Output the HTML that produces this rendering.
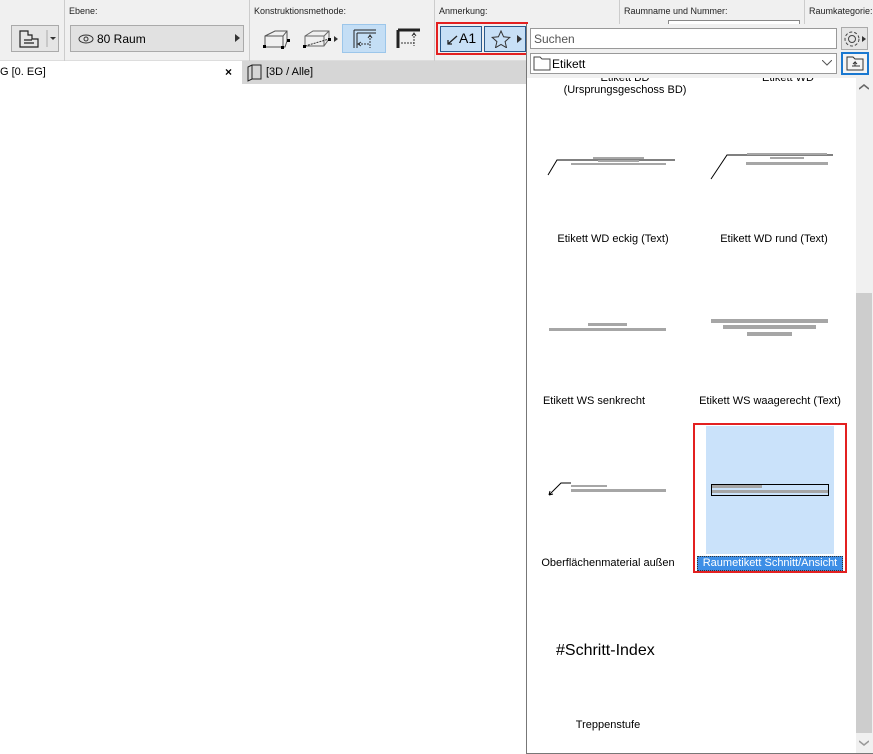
<!DOCTYPE html><html><head><meta charset="utf-8"><style>
*{margin:0;padding:0;box-sizing:border-box}
body{width:873px;height:754px;overflow:hidden;background:#fff;font-family:"Liberation Sans",sans-serif;font-size:11px;color:#000;position:relative}
.a{position:absolute}
.lbl{font-size:9px;color:#222}
.bar{background:#a6a6a6;position:absolute}
.cap{position:absolute;font-size:11px;text-align:center;width:160px}
</style></head><body>
<div class="a" style="left:0;top:0;width:873px;height:61px;background:#f0f0f0;border-bottom:1px solid #ddd"></div>
<div class="a" style="left:64px;top:0;width:1px;height:61px;background:#ccc"></div>
<div class="a" style="left:249px;top:0;width:1px;height:61px;background:#ccc"></div>
<div class="a" style="left:434px;top:0;width:1px;height:61px;background:#ccc"></div>
<div class="a" style="left:619px;top:0;width:1px;height:28px;background:#ccc"></div>
<div class="a" style="left:804px;top:0;width:1px;height:28px;background:#ccc"></div>
<div class="a lbl" style="left:69px;top:6px">Ebene:</div>
<div class="a lbl" style="left:254px;top:6px">Konstruktionsmethode:</div>
<div class="a lbl" style="left:439px;top:6px">Anmerkung:</div>
<div class="a lbl" style="left:624px;top:6px">Raumname und Nummer:</div>
<div class="a lbl" style="left:809px;top:6px">Raumkategorie:</div>
<div class="a" style="left:668px;top:20px;width:132px;height:8px;border:1px solid #888;border-bottom:none;background:#fff"></div>
<div class="a" style="left:11px;top:25px;width:48px;height:27px;border:1px solid #aaa;background:#e5e5e5"></div>
<svg class="a" style="left:18px;top:28px" width="40" height="22"><path d="M2 3h8v4h4v4h6v8H2z M6 12h8M6 15h10" fill="none" stroke="#222" stroke-width="1.2"/><line x1="29" y1="2" x2="29" y2="19" stroke="#aaa"/><path d="M32 9h6l-3 3z" fill="#333"/></svg>
<div class="a" style="left:70px;top:25px;width:174px;height:27px;border:1px solid #aaa;background:#e1e1e1"></div>
<svg class="a" style="left:78px;top:34px" width="16" height="10"><ellipse cx="8" cy="5" rx="7" ry="4" fill="none" stroke="#333"/><circle cx="8" cy="5" r="2" fill="none" stroke="#333"/></svg>
<div class="a" style="left:97px;top:32px;font-size:12px">80 Raum</div>
<svg class="a" style="left:235px;top:34px" width="6" height="8"><path d="M0 0l5 4-5 4z" fill="#333"/></svg>
<svg class="a" style="left:262px;top:28px" width="30" height="24"><path d="M3 8l10-5h12v10l-2 6H3z M3 8h18l4-5 M21 8v11" fill="none" stroke="#555"/><rect x="1" y="17" width="3" height="3"/><rect x="19" y="18" width="3" height="3"/><rect x="25" y="11" width="3" height="3"/></svg>
<svg class="a" style="left:302px;top:28px" width="38" height="24"><path d="M3 8l8-5h16v8l-5 7H3z M3 8h19l5-5 M22 8v10" fill="none" stroke="#666"/><path d="M3 18l24-7" stroke="#333" stroke-dasharray="2 1"/><rect x="1" y="17" width="3" height="3"/><rect x="26" y="10" width="3" height="3"/><path d="M32 8l4 3-4 3z" fill="#333"/></svg>
<div class="a" style="left:342px;top:24px;width:44px;height:29px;background:#c4def5;border:1px solid #9cc6ea"></div>
<svg class="a" style="left:352px;top:28px" width="26" height="22"><path d="M2 2h22M2 2v18M5 5h19M5 5v15" stroke="#222" fill="none"/><path d="M18 7v13M6 16h12" stroke="#333" stroke-dasharray="2 1"/><path d="M16 10l2-3 2 3M9 14l-3 2 3 2" stroke="#333" fill="none"/></svg>
<svg class="a" style="left:396px;top:28px" width="26" height="22"><path d="M2 2h22M2 2v18" stroke="#222" stroke-width="3" fill="none"/><path d="M18 5v13M5 15h13" stroke="#333" stroke-dasharray="2 1"/><path d="M16 8l2-3 2 3" stroke="#333" fill="none"/></svg>
<div class="a" style="left:436px;top:22px;width:92px;height:33px;border:2px solid #e32020"></div>
<div class="a" style="left:440px;top:26px;width:42px;height:26px;background:#c8e0f6;border:1px solid #2a5a8c"></div>
<div class="a" style="left:484px;top:26px;width:42px;height:26px;background:#c8e0f6;border:1px solid #2a5a8c"></div>
<svg class="a" style="left:447px;top:32px" width="12" height="14"><path d="M10 4L1 12M1 8v4h4" stroke="#222" fill="none" stroke-width="1.3"/></svg>
<div class="a" style="left:459px;top:30px;font-size:14px">A1</div>
<svg class="a" style="left:491px;top:30px" width="20" height="18"><path d="M10 1l2.6 5.8 6.2.6-4.7 4.2 1.4 6.1L10 14.5l-5.5 3.2 1.4-6.1L1.2 7.4l6.2-.6z" fill="none" stroke="#333"/></svg>
<svg class="a" style="left:517px;top:35px" width="5" height="8"><path d="M0 0l5 4-5 4z" fill="#333"/></svg>
<div class="a" style="left:0;top:61px;width:873px;height:23px;background:#d6d6d6"></div>
<div class="a" style="left:0;top:61px;width:242px;height:23px;background:#fff"></div>
<div class="a" style="left:0;top:66px;font-size:11px">G [0. EG]</div>
<div class="a" style="left:225px;top:65px;font-size:12px;font-weight:bold">×</div>
<svg class="a" style="left:246px;top:64px" width="18" height="18"><path d="M2 3l4-2h9v14H6l-4 2z M6 1v14" fill="none" stroke="#222"/></svg>
<div class="a" style="left:266px;top:66px">[3D / Alle]</div>
<div class="a" style="left:526px;top:24px;width:347px;height:730px;background:#f0f0f0;border-left:1px solid #777;border-bottom:1px solid #777"></div>
<div class="a" style="left:530px;top:28px;width:307px;height:21px;background:#fff;border:1px solid #999"></div>
<div class="a" style="left:534px;top:32px;font-size:12px;color:#555">Suchen</div>
<div class="a" style="left:841px;top:27px;width:27px;height:23px;border:1px solid #aaa;background:#e5e5e5"></div>
<svg class="a" style="left:842px;top:29px" width="26" height="20"><circle cx="10" cy="10" r="3.5" fill="none" stroke="#444"/><circle cx="10" cy="10" r="7" fill="none" stroke="#444" stroke-dasharray="3 2"/><path d="M20 7l4 3-4 3z" fill="#333"/></svg>
<div class="a" style="left:530px;top:53px;width:307px;height:21px;background:#fff;border:1px solid #999"></div>
<svg class="a" style="left:533px;top:56px" width="18" height="15"><path d="M1 1h6l2 2h8v11H1z" fill="none" stroke="#444"/></svg>
<div class="a" style="left:552px;top:57px;font-size:12px">Etikett</div>
<svg class="a" style="left:822px;top:60px" width="10" height="6"><path d="M0 0l5 5 5-5" fill="none" stroke="#555"/></svg>
<div class="a" style="left:841px;top:52px;width:28px;height:23px;border:2px solid #1a78d0;background:#f4f4f4"></div>
<svg class="a" style="left:846px;top:56px" width="18" height="15"><path d="M1 1h6l2 2h8v11H1z M6 10h8 M9 10V6l-2 2 M9 6l2 2" fill="none" stroke="#333"/></svg>
<div class="a" style="left:527px;top:78px;width:329px;height:675px;background:#fff"></div>
<div class="a" style="left:856px;top:78px;width:16px;height:675px;background:#f0f0f0"></div>
<div class="a" style="left:856px;top:293px;width:16px;height:440px;background:#cdcdcd"></div>
<svg class="a" style="left:859px;top:84px" width="10" height="6"><path d="M0 5l5-4 5 4" fill="none" stroke="#666" stroke-width="1.5"/></svg>
<svg class="a" style="left:859px;top:740px" width="10" height="6"><path d="M0 1l5 4 5-4" fill="none" stroke="#999" stroke-width="1.5"/></svg>
<div class="a" style="left:527px;top:78px;width:329px;height:6px;overflow:hidden"><div class="cap" style="left:18px;top:-6px">Etikett BD</div><div class="cap" style="left:181px;top:-6px">Etikett WD</div></div>
<div class="cap" style="left:545px;top:84px">(Ursprungsgeschoss BD)</div>
<svg class="a" style="left:545px;top:150px" width="130" height="30"><path d="M3 25l9-15h125" fill="none" stroke="#000"/></svg>
<div class="bar" style="left:593px;top:157px;width:51px;height:2px"></div>
<div class="bar" style="left:598px;top:160px;width:41px;height:2px"></div>
<div class="bar" style="left:571px;top:163px;width:95px;height:2px"></div>
<svg class="a" style="left:708px;top:150px" width="125" height="32"><path d="M3 29l16-24h110" fill="none" stroke="#000"/></svg>
<div class="bar" style="left:747px;top:153px;width:80px;height:2px"></div>
<div class="bar" style="left:770px;top:157px;width:34px;height:2px"></div>
<div class="bar" style="left:746px;top:162px;width:82px;height:3px"></div>
<div class="cap" style="left:533px;top:233px">Etikett WD eckig (Text)</div>
<div class="cap" style="left:694px;top:233px">Etikett WD rund (Text)</div>
<div class="bar" style="left:588px;top:323px;width:39px;height:3px"></div>
<div class="bar" style="left:549px;top:328px;width:117px;height:3px"></div>
<div class="bar" style="left:711px;top:319px;width:117px;height:4px"></div>
<div class="bar" style="left:723px;top:325px;width:93px;height:4px"></div>
<div class="bar" style="left:747px;top:332px;width:45px;height:4px"></div>
<div class="cap" style="left:514px;top:395px">Etikett WS senkrecht</div>
<div class="cap" style="left:690px;top:395px;width:160px">Etikett WS waagerecht (Text)</div>
<svg class="a" style="left:547px;top:482px" width="30" height="16"><path d="M24 1h-10l-12 12M2 13l1-4M2 13l4-1" fill="none" stroke="#000"/></svg>
<div class="bar" style="left:571px;top:485px;width:36px;height:2px"></div>
<div class="bar" style="left:571px;top:489px;width:95px;height:3px"></div>
<div class="cap" style="left:528px;top:557px;width:160px">Oberflächenmaterial außen</div>
<div class="a" style="left:693px;top:423px;width:154px;height:150px;border:2px solid #e32020"></div>
<div class="a" style="left:706px;top:426px;width:128px;height:128px;background:#cae2fa"></div>
<div class="a" style="left:711px;top:484px;width:118px;height:12px;border:1px solid #000"></div>
<div class="bar" style="left:712px;top:485px;width:50px;height:3px"></div>
<div class="bar" style="left:712px;top:490px;width:116px;height:3px"></div>
<div class="a" style="left:697px;top:556px;width:146px;height:15px;background:#3d8ee6;border:1px dotted #333;color:#fff;font-size:11px;text-align:center;line-height:13px">Raumetikett Schnitt/Ansicht</div>
<div class="a" style="left:556px;top:642px;font-size:16px">#Schritt-Index</div>
<div class="cap" style="left:528px;top:719px">Treppenstufe</div>
</body></html>
